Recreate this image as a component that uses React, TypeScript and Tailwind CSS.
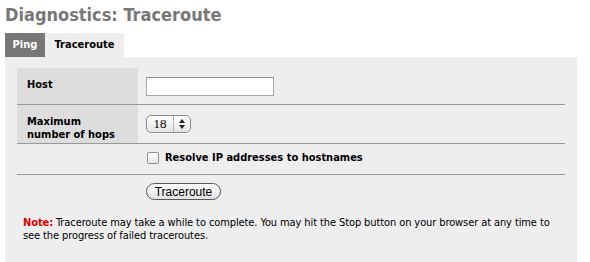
import React from "react";

const labelCell =
  "w-[121px] shrink-0 bg-[#ddd] pl-[10px] pt-[10px] text-[11px] font-bold leading-[13px] text-black";

function Spinner({ value }: { value: string }) {
  return (
    <div className="flex h-[18px] w-[45px] items-stretch overflow-hidden rounded-[5px] border border-[#8a8a8a] bg-gradient-to-b from-white to-[#e4e4e4] shadow-[0_1px_0_rgba(255,255,255,0.8)]">
      <span className="flex flex-1 items-center justify-center font-['Liberation_Serif',serif] text-[13px] text-black">
        {value}
      </span>
      <span className="flex w-[17px] flex-col items-center justify-center gap-[2px] border-l border-[#b5b5b5]">
        <svg width="6" height="4" viewBox="0 0 6 4">
          <path d="M3 0 L6 4 L0 4 Z" fill="#222" />
        </svg>
        <svg width="6" height="4" viewBox="0 0 6 4">
          <path d="M0 0 L6 0 L3 4 Z" fill="#222" />
        </svg>
      </span>
    </div>
  );
}

export default function App() {
  return (
    <div className="h-[262px] w-[590px] overflow-hidden bg-white font-['DejaVu_Sans_Condensed','DejaVu_Sans',sans-serif]">
      <h1 className="pl-[5px] pt-[4px] text-[18px] font-bold leading-[22px] text-[#777]">
        Diagnostics: Traceroute
      </h1>

      <div className="ml-[5px] mt-[7px] flex h-[24px] text-[11px] font-bold">
        <div className="flex w-[40px] items-center justify-center bg-[#777] text-white">Ping</div>
        <div className="flex w-[79px] items-center justify-center bg-[#eee] text-black">Traceroute</div>
      </div>

      <div className="ml-[5px] h-[205px] w-[572px] bg-[#eee] px-[12px] pt-[11px]">
        <div className="flex flex-col">
          <div className="flex h-[37px] border-b border-[#999]">
            <div className={labelCell}>Host</div>
            <div className="pl-[8px] pt-[9px]">
              <input
                type="text"
                className="block h-[19px] w-[128px] border border-[#a5a5a5] border-t-[#8c8c8c] bg-white outline-none"
              />
            </div>
          </div>

          <div className="flex h-[39px] border-b border-[#999]">
            <div className={labelCell}>
              Maximum
              <br />
              number of hops
            </div>
            <div className="pl-[8px] pt-[10px]">
              <Spinner value="18" />
            </div>
          </div>

          <div className="flex h-[31px] border-b border-[#999]">
            <div className="w-[121px] shrink-0" />
            <label className="flex items-center gap-[6px] pl-[9px] pt-[8px] self-start text-[11px] font-bold leading-[12px] text-black">
              <span className="block h-[12px] w-[12px] rounded-[2px] border border-[#8f8f8f] bg-gradient-to-b from-white to-[#e8e8e8]" />
              Resolve IP addresses to hostnames
            </label>
          </div>

          <div className="flex h-[33px]">
            <div className="w-[121px] shrink-0" />
            <div className="pl-[8px] pt-[8px]">
              <button
                type="button"
                className="flex h-[17px] w-[75px] items-center justify-center rounded-full border border-[#555] bg-gradient-to-b from-white to-[#e2e2e2] font-['Liberation_Sans',sans-serif] text-[12px] leading-none text-black"
              >
                Traceroute
              </button>
            </div>
          </div>
        </div>

        <p className="mt-[8px] whitespace-nowrap pl-[6px] text-[11px] leading-[13px] tracking-[-0.1px] text-black">
          <span className="font-bold text-[#d00]">Note:</span> Traceroute may take a while to complete. You may hit the Stop
          button on your browser at any time to
          <br />
          see the progress of failed traceroutes.
        </p>
      </div>
    </div>
  );
}
